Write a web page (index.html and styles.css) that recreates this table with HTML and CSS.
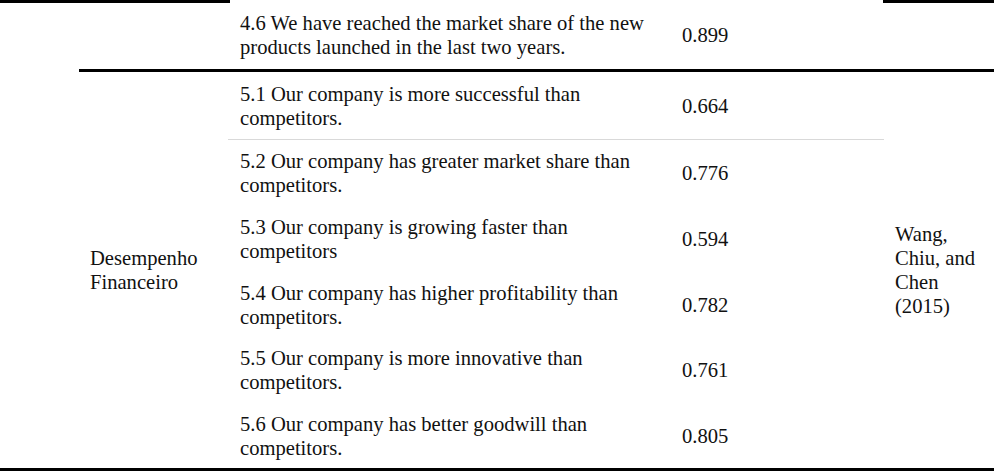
FILE: index.html
```html
<!DOCTYPE html>
<html lang="en">
<head>
<meta charset="utf-8">
<title>Tabela</title>
<link rel="stylesheet" href="styles.css">
</head>
<body>
<div class="table">
  <div class="cell col-a"></div>
  <div class="cell col-b first-b"></div>
  <div class="cell item r1">4.6 We have reached the market share of the new<br>products launched in the last two years.</div>
  <div class="cell num r1">0.899</div>
  <div class="cell col-e first-e"></div>

  <div class="cell construct">Desempenho<br>Financeiro</div>
  <div class="cell item r2 sep">5.1 Our company is more successful than<br>competitors.</div>
  <div class="cell num r2 sep">0.664</div>
  <div class="cell author">Wang,<br>Chiu, and<br>Chen<br>(2015)</div>

  <div class="cell item">5.2 Our company has greater market share than<br>competitors.</div>
  <div class="cell num">0.776</div>
  <div class="cell item">5.3 Our company is growing faster than<br>competitors</div>
  <div class="cell num">0.594</div>
  <div class="cell item">5.4 Our company has higher profitability than<br>competitors.</div>
  <div class="cell num">0.782</div>
  <div class="cell item">5.5 Our company is more innovative than<br>competitors.</div>
  <div class="cell num">0.761</div>
  <div class="cell item">5.6 Our company has better goodwill than<br>competitors.</div>
  <div class="cell num">0.805</div>
</div>
</body>
</html>
```

FILE: styles.css
```css
html, body {
  margin: 0;
  padding: 0;
  background: #fff;
}

body {
  font-family: "Liberation Serif", "Times New Roman", serif;
  font-size: 20.6px;
  line-height: 24px;
  color: #111;
}

.table {
  width: 994px;
  display: grid;
  grid-template-columns: 79px 149px 442px 214px 110px;
  grid-template-rows: 69px 71px 66px 66px 65px 66px 65px;
  border-bottom: 3px solid #000;
}

.cell {
  display: flex;
  align-items: center;
  box-sizing: border-box;
}

.col-a {
  grid-column: 1;
  grid-row: 1 / 8;
  border-top: 3px solid #000;
}

.first-b {
  grid-column: 2;
  grid-row: 1;
  border-top: 3px solid #000;
  margin-right: -2px;
}

.first-e {
  grid-column: 5;
  grid-row: 1;
  border-top: 3px solid #000;
  margin-left: -1px;
}

.item {
  grid-column: 3;
  padding-left: 12px;
  white-space: nowrap;
}

.num {
  grid-column: 4;
  padding-left: 12px;
}

.r1 {
  grid-row: 1;
}

.r2 {
  grid-row: 2;
  border-top: 3px solid #000;
}

.sep {
  border-bottom: 1px solid #d9d9d9;
}

.construct {
  grid-column: 2;
  grid-row: 2 / 8;
  border-top: 3px solid #000;
  padding-left: 11px;
}

.author {
  grid-column: 5;
  grid-row: 2 / 8;
  border-top: 3px solid #000;
  padding-left: 11px;
  white-space: nowrap;
}
```
